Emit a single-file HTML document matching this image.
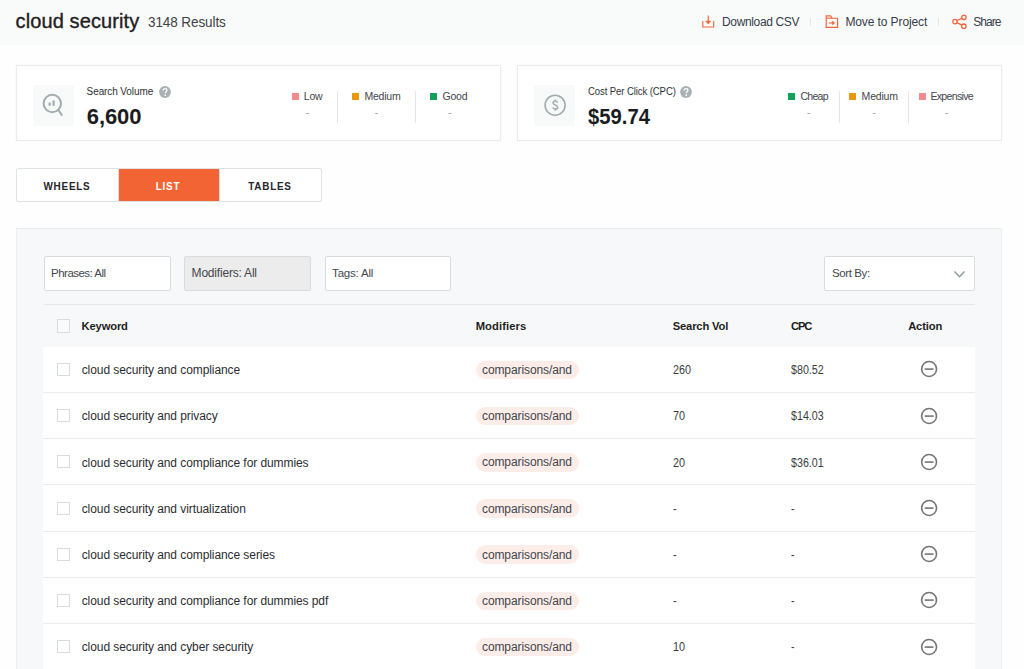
<!DOCTYPE html>
<html><head><meta charset="utf-8"><title>cloud security</title>
<style>
html,body{margin:0;padding:0;}
body{width:1024px;height:669px;overflow:hidden;position:relative;background:#fefefe;font-family:"Liberation Sans", sans-serif;}
.t{position:absolute;white-space:nowrap;line-height:1;}
.b{position:absolute;}
svg.b{overflow:visible}
</style></head><body>
<div class="b" style="left:0px;top:0px;width:1024px;height:45px;background:#f9fbfa"></div>
<div class="t" style="left:15.6px;top:11.17px;font-size:20px;font-weight:400;color:#1f2022;letter-spacing:0.1px;-webkit-text-stroke:0.35px #1f2022">cloud security</div>
<div class="t" style="left:147.5px;top:14.10px;font-size:15px;font-weight:400;color:#3f4145;letter-spacing:-0.1px;transform:scaleX(0.9);transform-origin:0 0">3148 Results</div>
<svg class="b" style="left:701px;top:14px" width="14" height="14" viewBox="0 0 14 14" fill="none" stroke="#f0663a" stroke-width="1.15"><path d="M1.8 7.1V13H12.7V7.1"/><path d="M7.25 1.4V8.5"/><path d="M4.6 7.1L7.25 10L9.9 7.1Z" fill="#f0663a" stroke-width="0.6"/></svg>
<div class="t" style="left:722px;top:15.64px;font-size:12px;font-weight:400;color:#363d4a;letter-spacing:-0.35px;">Download CSV</div>
<div class="b" style="left:810.2px;top:17.5px;width:1.0px;height:8.5px;background:#e2e4e6"></div>
<svg class="b" style="left:825px;top:15px" width="14" height="14" viewBox="0 0 14 14" fill="none" stroke="#f0663a" stroke-width="1.15"><path d="M1.2 0.9H5.6L7.1 3.2H12.6V12.4H1.2Z"/><path d="M1.2 3.2H6.8"/><path d="M3.9 8H8"/><path d="M7.4 6.1L9.8 8L7.4 9.9Z" fill="#f0663a" stroke-width="0.5"/></svg>
<div class="t" style="left:845.4px;top:15.64px;font-size:12px;font-weight:400;color:#363d4a;letter-spacing:-0.1px;">Move to Project</div>
<div class="b" style="left:938.2px;top:17.5px;width:1.0px;height:8.5px;background:#e2e4e6"></div>
<svg class="b" style="left:952px;top:14px" width="15" height="15" viewBox="0 0 15 15" fill="none" stroke="#f0663a" stroke-width="1.3"><circle cx="11.9" cy="3.3" r="2.2"/><circle cx="3" cy="7.6" r="2.2"/><circle cx="11.8" cy="12.2" r="2.2"/><path d="M5 6.5L9.9 4.3M5 8.7L9.9 11.2"/></svg>
<div class="t" style="left:973.3px;top:15.64px;font-size:12px;font-weight:400;color:#363d4a;letter-spacing:-0.95px;">Share</div>
<div class="b" style="left:16px;top:65px;width:485px;height:76px;background:#fff;border:1px solid #ececec;box-sizing:border-box;box-shadow:0 0 2px rgba(0,0,0,0.045)"></div>
<div class="b" style="left:33px;top:85px;width:41px;height:40.5px;background:#f8f9f9;border-radius:3px"></div>
<div class="b" style="left:517px;top:65px;width:485px;height:76px;background:#fff;border:1px solid #ececec;box-sizing:border-box;box-shadow:0 0 2px rgba(0,0,0,0.045)"></div>
<div class="b" style="left:534px;top:85px;width:41px;height:40.5px;background:#f8f9f9;border-radius:3px"></div>
<svg class="b" style="left:40px;top:92px" width="26" height="26" viewBox="0 0 26 26" fill="none" stroke="#a0acae" stroke-width="1.8"><circle cx="12.3" cy="11.5" r="8.7" stroke-width="2"/><path d="M18.4 18L22.2 23.6" stroke-width="2"/><path d="M9.7 10.6V13.8M13.6 8.6V13.8" stroke-width="2.2"/></svg>
<svg class="b" style="left:542px;top:93px" width="26" height="26" viewBox="0 0 26 26" fill="none" stroke="#a0acae" stroke-width="1.6"><circle cx="13.1" cy="12.2" r="10"/><path d="M15.5 9.7C15.2 8.7 14.4 8.1 13.3 8.1C12.1 8.1 11.1 8.8 11.1 9.9C11.1 12.1 15.6 11.6 15.6 14.2C15.6 15.4 14.6 16.1 13.3 16.1C12.1 16.1 11.2 15.5 10.9 14.5M13.3 6.4V8.1M13.3 16.1V17.8" stroke-width="1.5"/></svg>
<div class="t" style="left:86.6px;top:87.13px;font-size:10px;font-weight:400;color:#2f3133;letter-spacing:-0.1px;">Search Volume</div>
<div class="t" style="left:588.1px;top:87.13px;font-size:10px;font-weight:400;color:#2f3133;letter-spacing:-0.1px;transform:scaleX(0.955);transform-origin:0 0">Cost Per Click (CPC)</div>
<svg class="b" style="left:158.6px;top:86px" width="12" height="12" viewBox="0 0 12 12"><circle cx="6" cy="6" r="5.9" fill="#a8b1b4"/><path d="M4.1 4.6C4.1 3.4 5 2.6 6.1 2.6C7.2 2.6 8 3.3 8 4.3C8 5.5 6.3 5.8 6.3 7.3" fill="none" stroke="#fff" stroke-width="1.3"/><circle cx="6.3" cy="9.2" r="0.85" fill="#fff"/></svg>
<svg class="b" style="left:680.2px;top:86px" width="12" height="12" viewBox="0 0 12 12"><circle cx="6" cy="6" r="5.9" fill="#a8b1b4"/><path d="M4.1 4.6C4.1 3.4 5 2.6 6.1 2.6C7.2 2.6 8 3.3 8 4.3C8 5.5 6.3 5.8 6.3 7.3" fill="none" stroke="#fff" stroke-width="1.3"/><circle cx="6.3" cy="9.2" r="0.85" fill="#fff"/></svg>
<div class="t" style="left:86.8px;top:105.88px;font-size:22px;font-weight:700;color:#1b1c1e;letter-spacing:-0.1px;">6,600</div>
<div class="t" style="left:588.2px;top:105.98px;font-size:22px;font-weight:700;color:#1b1c1e;letter-spacing:0px;transform:scaleX(0.92);transform-origin:0 0">$59.74</div>
<div class="b" style="left:291.7px;top:92.7px;width:7.0px;height:6.8999999999999915px;background:#f38b8e"></div>
<div class="t" style="left:303.8px;top:91.01px;font-size:10.5px;font-weight:400;color:#43464c;letter-spacing:-0.2px;">Low</div>
<div class="t" style="left:305.8px;top:107.53px;font-size:10px;font-weight:400;color:#9a9ea2;letter-spacing:0px;">-</div>
<div class="b" style="left:351.9px;top:92.7px;width:7.0px;height:6.8999999999999915px;background:#e8990f"></div>
<div class="t" style="left:364.4px;top:91.01px;font-size:10.5px;font-weight:400;color:#43464c;letter-spacing:-0.2px;">Medium</div>
<div class="t" style="left:374.8px;top:107.53px;font-size:10px;font-weight:400;color:#9a9ea2;letter-spacing:0px;">-</div>
<div class="b" style="left:430.4px;top:92.7px;width:7.0px;height:6.8999999999999915px;background:#12a05c"></div>
<div class="t" style="left:442.5px;top:91.01px;font-size:10.5px;font-weight:400;color:#43464c;letter-spacing:-0.2px;">Good</div>
<div class="t" style="left:448px;top:107.53px;font-size:10px;font-weight:400;color:#9a9ea2;letter-spacing:0px;">-</div>
<div class="b" style="left:337.2px;top:90.7px;width:1.0px;height:32.3px;background:#e3e5e7"></div>
<div class="b" style="left:415px;top:90.7px;width:1px;height:32.3px;background:#e3e5e7"></div>
<div class="b" style="left:788.2px;top:92.7px;width:7.0px;height:6.8999999999999915px;background:#12a05c"></div>
<div class="t" style="left:800.4px;top:91.01px;font-size:10.5px;font-weight:400;color:#43464c;letter-spacing:-0.7px;">Cheap</div>
<div class="t" style="left:807.1px;top:107.53px;font-size:10px;font-weight:400;color:#9a9ea2;letter-spacing:0px;">-</div>
<div class="b" style="left:849.2px;top:92.7px;width:7.0px;height:6.8999999999999915px;background:#e8990f"></div>
<div class="t" style="left:861.6px;top:91.01px;font-size:10.5px;font-weight:400;color:#43464c;letter-spacing:-0.2px;">Medium</div>
<div class="t" style="left:872.4px;top:107.53px;font-size:10px;font-weight:400;color:#9a9ea2;letter-spacing:0px;">-</div>
<div class="b" style="left:918.6px;top:92.7px;width:7.0px;height:6.8999999999999915px;background:#f38b8e"></div>
<div class="t" style="left:930.4px;top:91.01px;font-size:10.5px;font-weight:400;color:#43464c;letter-spacing:-0.65px;">Expensive</div>
<div class="t" style="left:945px;top:107.53px;font-size:10px;font-weight:400;color:#9a9ea2;letter-spacing:0px;">-</div>
<div class="b" style="left:839.2px;top:90.7px;width:1.0px;height:32.3px;background:#e3e5e7"></div>
<div class="b" style="left:908.2px;top:90.7px;width:1.0px;height:32.3px;background:#e3e5e7"></div>
<div class="b" style="left:16px;top:168px;width:305.5px;height:33.5px;background:#fff;border:1px solid #dfe3e6;box-sizing:border-box;border-radius:2px"></div>
<div class="b" style="left:117.6px;top:168.5px;width:1.0px;height:32.5px;background:#d6dbde"></div>
<div class="b" style="left:118.6px;top:169px;width:100.4px;height:32px;background:#f26433"></div>
<div class="b" style="left:219px;top:168.5px;width:1px;height:32.5px;background:#d6dbde"></div>
<div class="t" style="left:6.5px;width:120px;text-align:center;top:180.97px;font-size:11.5px;font-weight:700;color:#24262a;letter-spacing:0.9px;transform:scaleX(0.86);transform-origin:50% 0">WHEELS</div>
<div class="t" style="left:107.80000000000001px;width:120px;text-align:center;top:180.97px;font-size:11.5px;font-weight:700;color:#ffffff;letter-spacing:0.9px;transform:scaleX(0.86);transform-origin:50% 0">LIST</div>
<div class="t" style="left:210px;width:120px;text-align:center;top:180.97px;font-size:11.5px;font-weight:700;color:#24262a;letter-spacing:0.9px;transform:scaleX(0.86);transform-origin:50% 0">TABLES</div>
<div class="b" style="left:16px;top:228px;width:986px;height:441px;background:#f7f8fa;border:1px solid #eceef0;border-bottom:none;box-sizing:border-box"></div>
<div class="b" style="left:43.5px;top:256px;width:127.0px;height:34.60000000000002px;background:#fff;border:1px solid #d9dcdf;box-sizing:border-box;border-radius:2px"></div>
<div class="t" style="left:51.1px;top:267.67px;font-size:11.5px;font-weight:400;color:#44474c;letter-spacing:-0.53px;">Phrases: All</div>
<div class="b" style="left:184px;top:256px;width:126.5px;height:34.60000000000002px;background:#ececec;border:1px solid #d9dcdf;box-sizing:border-box;border-radius:2px"></div>
<div class="t" style="left:191.6px;top:267.24px;font-size:12px;font-weight:400;color:#44474c;letter-spacing:-0.2px;">Modifiers: All</div>
<div class="b" style="left:324.5px;top:256px;width:126.5px;height:34.60000000000002px;background:#fff;border:1px solid #d9dcdf;box-sizing:border-box;border-radius:2px"></div>
<div class="t" style="left:332.1px;top:267.67px;font-size:11.5px;font-weight:400;color:#44474c;letter-spacing:-0.2px;">Tags: All</div>
<div class="b" style="left:824.4px;top:256px;width:150.20000000000005px;height:34.60000000000002px;background:#fff;border:1px solid #d9dcdf;box-sizing:border-box;border-radius:2px"></div>
<div class="t" style="left:832.0px;top:268.47px;font-size:11.5px;font-weight:400;color:#44474c;letter-spacing:-0.4px;">Sort By:</div>
<svg class="b" style="left:953px;top:269px" width="13" height="10" viewBox="0 0 13 10" fill="none" stroke="#8e999c" stroke-width="1.4"><path d="M1.5 2.5L6.5 7.8L11.5 2.5"/></svg>
<div class="b" style="left:43.5px;top:304px;width:931.5px;height:1px;background:#e5e7ea"></div>
<div class="b" style="left:57px;top:319px;width:13px;height:13.5px;background:#f9fafb;border:1px solid #dadddf;box-sizing:border-box"></div>
<div class="t" style="left:81.6px;top:320.72px;font-size:11.2px;font-weight:700;color:#1d1f22;letter-spacing:-0.15px;">Keyword</div>
<div class="t" style="left:475.7px;top:320.72px;font-size:11.2px;font-weight:700;color:#1d1f22;letter-spacing:0.1px;">Modifiers</div>
<div class="t" style="left:672.7px;top:320.72px;font-size:11.2px;font-weight:700;color:#1d1f22;letter-spacing:-0.15px;">Search Vol</div>
<div class="t" style="left:791px;top:320.72px;font-size:11.2px;font-weight:700;color:#1d1f22;letter-spacing:-1.2px;">CPC</div>
<div class="t" style="left:908.2px;top:320.72px;font-size:11.2px;font-weight:700;color:#1d1f22;letter-spacing:-0.15px;">Action</div>
<div class="b" style="left:43px;top:346.8px;width:932px;height:46.19999999999999px;background:#fff;border-bottom:1px solid #eaeced;box-sizing:border-box"></div>
<div class="b" style="left:57px;top:362.90000000000003px;width:13px;height:13.0px;background:#fff;border:1px solid #d9dcdf;box-sizing:border-box"></div>
<div class="t" style="left:81.7px;top:364.24px;font-size:12px;font-weight:400;color:#2b2d31;letter-spacing:-0.08px;">cloud security and compliance</div>
<div class="b" style="left:476px;top:360.6px;width:103px;height:18.69999999999999px;background:#fdede9;border-radius:10px"></div>
<div class="t" style="left:482px;top:363.94px;font-size:12px;font-weight:400;color:#41454c;letter-spacing:-0.1px;">comparisons/and</div>
<div class="t" style="left:672.7px;top:364.24px;font-size:12px;font-weight:400;color:#3a3c40;letter-spacing:0px;transform:scaleX(0.9);transform-origin:0 0">260</div>
<div class="t" style="left:791px;top:364.24px;font-size:12px;font-weight:400;color:#3a3c40;letter-spacing:0px;transform:scaleX(0.89);transform-origin:0 0">$80.52</div>
<svg class="b" style="left:919px;top:359.30px" width="20" height="20" viewBox="0 0 20 20" fill="none" stroke="#737476" stroke-width="1.6"><circle cx="10.1" cy="10" r="7.45"/><path d="M5.7 10.1H14.5"/></svg>
<div class="b" style="left:43px;top:393.0px;width:932px;height:46.19999999999999px;background:#fff;border-bottom:1px solid #eaeced;box-sizing:border-box"></div>
<div class="b" style="left:57px;top:409.1px;width:13px;height:13.0px;background:#fff;border:1px solid #d9dcdf;box-sizing:border-box"></div>
<div class="t" style="left:81.7px;top:410.44px;font-size:12px;font-weight:400;color:#2b2d31;letter-spacing:-0.08px;">cloud security and privacy</div>
<div class="b" style="left:476px;top:406.8px;width:103px;height:18.69999999999999px;background:#fdede9;border-radius:10px"></div>
<div class="t" style="left:482px;top:410.14px;font-size:12px;font-weight:400;color:#41454c;letter-spacing:-0.1px;">comparisons/and</div>
<div class="t" style="left:672.7px;top:410.44px;font-size:12px;font-weight:400;color:#3a3c40;letter-spacing:0px;transform:scaleX(0.9);transform-origin:0 0">70</div>
<div class="t" style="left:791px;top:410.44px;font-size:12px;font-weight:400;color:#3a3c40;letter-spacing:0px;transform:scaleX(0.89);transform-origin:0 0">$14.03</div>
<svg class="b" style="left:919px;top:405.50px" width="20" height="20" viewBox="0 0 20 20" fill="none" stroke="#737476" stroke-width="1.6"><circle cx="10.1" cy="10" r="7.45"/><path d="M5.7 10.1H14.5"/></svg>
<div class="b" style="left:43px;top:439.20000000000005px;width:932px;height:46.19999999999999px;background:#fff;border-bottom:1px solid #eaeced;box-sizing:border-box"></div>
<div class="b" style="left:57px;top:455.30000000000007px;width:13px;height:13.0px;background:#fff;border:1px solid #d9dcdf;box-sizing:border-box"></div>
<div class="t" style="left:81.7px;top:456.64px;font-size:12px;font-weight:400;color:#2b2d31;letter-spacing:-0.08px;">cloud security and compliance for dummies</div>
<div class="b" style="left:476px;top:453.00000000000006px;width:103px;height:18.69999999999999px;background:#fdede9;border-radius:10px"></div>
<div class="t" style="left:482px;top:456.34px;font-size:12px;font-weight:400;color:#41454c;letter-spacing:-0.1px;">comparisons/and</div>
<div class="t" style="left:672.7px;top:456.64px;font-size:12px;font-weight:400;color:#3a3c40;letter-spacing:0px;transform:scaleX(0.9);transform-origin:0 0">20</div>
<div class="t" style="left:791px;top:456.64px;font-size:12px;font-weight:400;color:#3a3c40;letter-spacing:0px;transform:scaleX(0.89);transform-origin:0 0">$36.01</div>
<svg class="b" style="left:919px;top:451.70px" width="20" height="20" viewBox="0 0 20 20" fill="none" stroke="#737476" stroke-width="1.6"><circle cx="10.1" cy="10" r="7.45"/><path d="M5.7 10.1H14.5"/></svg>
<div class="b" style="left:43px;top:485.40000000000003px;width:932px;height:46.19999999999999px;background:#fff;border-bottom:1px solid #eaeced;box-sizing:border-box"></div>
<div class="b" style="left:57px;top:501.50000000000006px;width:13px;height:12.999999999999943px;background:#fff;border:1px solid #d9dcdf;box-sizing:border-box"></div>
<div class="t" style="left:81.7px;top:502.84px;font-size:12px;font-weight:400;color:#2b2d31;letter-spacing:-0.08px;">cloud security and virtualization</div>
<div class="b" style="left:476px;top:499.20000000000005px;width:103px;height:18.700000000000045px;background:#fdede9;border-radius:10px"></div>
<div class="t" style="left:482px;top:502.54px;font-size:12px;font-weight:400;color:#41454c;letter-spacing:-0.1px;">comparisons/and</div>
<div class="t" style="left:672.7px;top:502.84px;font-size:12px;font-weight:400;color:#3a3c40;letter-spacing:0px;transform:scaleX(0.9);transform-origin:0 0">-</div>
<div class="t" style="left:791px;top:502.84px;font-size:12px;font-weight:400;color:#3a3c40;letter-spacing:0px;transform:scaleX(0.89);transform-origin:0 0">-</div>
<svg class="b" style="left:919px;top:497.90px" width="20" height="20" viewBox="0 0 20 20" fill="none" stroke="#737476" stroke-width="1.6"><circle cx="10.1" cy="10" r="7.45"/><path d="M5.7 10.1H14.5"/></svg>
<div class="b" style="left:43px;top:531.6px;width:932px;height:46.200000000000045px;background:#fff;border-bottom:1px solid #eaeced;box-sizing:border-box"></div>
<div class="b" style="left:57px;top:547.7px;width:13px;height:13.0px;background:#fff;border:1px solid #d9dcdf;box-sizing:border-box"></div>
<div class="t" style="left:81.7px;top:549.04px;font-size:12px;font-weight:400;color:#2b2d31;letter-spacing:-0.08px;">cloud security and compliance series</div>
<div class="b" style="left:476px;top:545.4px;width:103px;height:18.700000000000045px;background:#fdede9;border-radius:10px"></div>
<div class="t" style="left:482px;top:548.74px;font-size:12px;font-weight:400;color:#41454c;letter-spacing:-0.1px;">comparisons/and</div>
<div class="t" style="left:672.7px;top:549.04px;font-size:12px;font-weight:400;color:#3a3c40;letter-spacing:0px;transform:scaleX(0.9);transform-origin:0 0">-</div>
<div class="t" style="left:791px;top:549.04px;font-size:12px;font-weight:400;color:#3a3c40;letter-spacing:0px;transform:scaleX(0.89);transform-origin:0 0">-</div>
<svg class="b" style="left:919px;top:544.10px" width="20" height="20" viewBox="0 0 20 20" fill="none" stroke="#737476" stroke-width="1.6"><circle cx="10.1" cy="10" r="7.45"/><path d="M5.7 10.1H14.5"/></svg>
<div class="b" style="left:43px;top:577.8px;width:932px;height:46.200000000000045px;background:#fff;border-bottom:1px solid #eaeced;box-sizing:border-box"></div>
<div class="b" style="left:57px;top:593.9px;width:13px;height:13.0px;background:#fff;border:1px solid #d9dcdf;box-sizing:border-box"></div>
<div class="t" style="left:81.7px;top:595.24px;font-size:12px;font-weight:400;color:#2b2d31;letter-spacing:-0.08px;">cloud security and compliance for dummies pdf</div>
<div class="b" style="left:476px;top:591.5999999999999px;width:103px;height:18.700000000000045px;background:#fdede9;border-radius:10px"></div>
<div class="t" style="left:482px;top:594.94px;font-size:12px;font-weight:400;color:#41454c;letter-spacing:-0.1px;">comparisons/and</div>
<div class="t" style="left:672.7px;top:595.24px;font-size:12px;font-weight:400;color:#3a3c40;letter-spacing:0px;transform:scaleX(0.9);transform-origin:0 0">-</div>
<div class="t" style="left:791px;top:595.24px;font-size:12px;font-weight:400;color:#3a3c40;letter-spacing:0px;transform:scaleX(0.89);transform-origin:0 0">-</div>
<svg class="b" style="left:919px;top:590.30px" width="20" height="20" viewBox="0 0 20 20" fill="none" stroke="#737476" stroke-width="1.6"><circle cx="10.1" cy="10" r="7.45"/><path d="M5.7 10.1H14.5"/></svg>
<div class="b" style="left:43px;top:624.0px;width:932px;height:46.200000000000045px;background:#fff;border-bottom:1px solid #eaeced;box-sizing:border-box"></div>
<div class="b" style="left:57px;top:640.1px;width:13px;height:13.0px;background:#fff;border:1px solid #d9dcdf;box-sizing:border-box"></div>
<div class="t" style="left:81.7px;top:641.44px;font-size:12px;font-weight:400;color:#2b2d31;letter-spacing:-0.08px;">cloud security and cyber security</div>
<div class="b" style="left:476px;top:637.8px;width:103px;height:18.700000000000045px;background:#fdede9;border-radius:10px"></div>
<div class="t" style="left:482px;top:641.14px;font-size:12px;font-weight:400;color:#41454c;letter-spacing:-0.1px;">comparisons/and</div>
<div class="t" style="left:672.7px;top:641.44px;font-size:12px;font-weight:400;color:#3a3c40;letter-spacing:0px;transform:scaleX(0.9);transform-origin:0 0">10</div>
<div class="t" style="left:791px;top:641.44px;font-size:12px;font-weight:400;color:#3a3c40;letter-spacing:0px;transform:scaleX(0.89);transform-origin:0 0">-</div>
<svg class="b" style="left:919px;top:636.50px" width="20" height="20" viewBox="0 0 20 20" fill="none" stroke="#737476" stroke-width="1.6"><circle cx="10.1" cy="10" r="7.45"/><path d="M5.7 10.1H14.5"/></svg>
</body></html>
